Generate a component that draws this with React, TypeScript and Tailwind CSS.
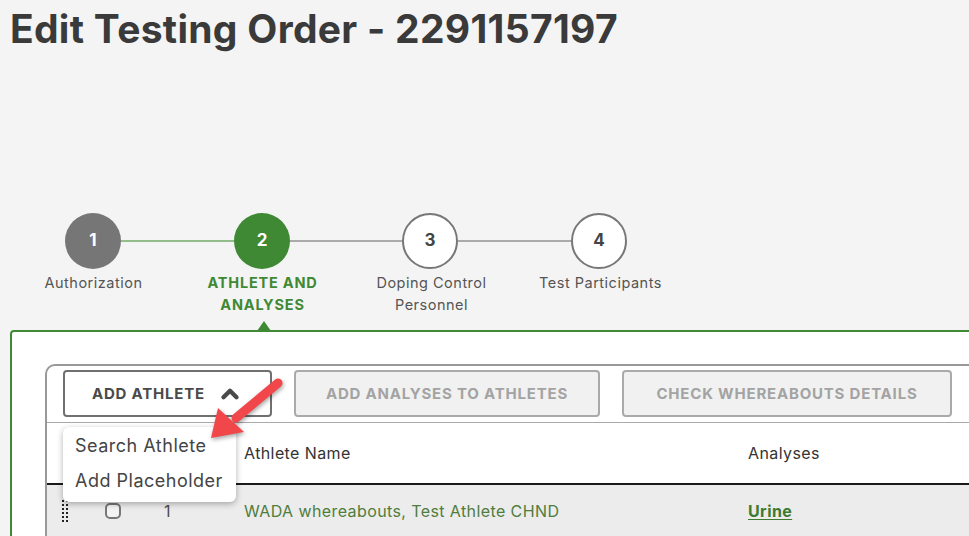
import { ChevronUp } from "lucide-react";

const font = { fontFamily: "Inter, 'Open Sans', sans-serif" };

type Step = { n: number; label: string[]; state: "done" | "active" | "todo" };

const steps: Step[] = [
  { n: 1, label: ["Authorization"], state: "done" },
  { n: 2, label: ["ATHLETE AND", "ANALYSES"], state: "active" },
  { n: 3, label: ["Doping Control", "Personnel"], state: "todo" },
  { n: 4, label: ["Test Participants"], state: "todo" },
];

function Circle({ step }: { step: Step }) {
  const cls =
    step.state === "done"
      ? "bg-[#767676] text-white"
      : step.state === "active"
        ? "bg-[#3f8934] text-white"
        : "bg-white text-[#444] border-2 border-[#777]";
  return (
    <div
      className={`w-[56px] h-[56px] rounded-full flex items-center justify-center text-[17px] font-bold shrink-0 ${cls}`}
    >
      {step.n}
    </div>
  );
}

function Stepper() {
  return (
    <div className="mt-[161px]">
      <div className="flex items-center pl-[65px]">
        <Circle step={steps[0]} />
        <div className="w-[113px] h-[2px] bg-[#93bd8a]" />
        <Circle step={steps[1]} />
        <div className="w-[112px] h-[2px] bg-[#aaa]" />
        <Circle step={steps[2]} />
        <div className="w-[113px] h-[2px] bg-[#aaa]" />
        <Circle step={steps[3]} />
      </div>
      <div className="flex pl-[9px] mt-[3px]">
        {steps.map((s) => (
          <div
            key={s.n}
            className={`w-[169px] text-center leading-[22px] ${
              s.state === "active"
                ? "text-[#3f8934] font-bold text-[14.5px] tracking-[0.8px]"
                : "text-[#555] text-[14.5px] tracking-[0.5px]"
            }`}
          >
            {s.label.map((l) => (
              <div key={l}>{l}</div>
            ))}
          </div>
        ))}
      </div>
    </div>
  );
}

function Handle() {
  return (
    <div className="grid grid-cols-2 gap-[2px] w-[6px]">
      {Array.from({ length: 12 }).map((_, i) => (
        <div key={i} className="w-[2px] h-[2px] bg-[#222]" />
      ))}
    </div>
  );
}

function RedArrow() {
  return (
    <svg
      className="absolute left-[200px] top-[370px] pointer-events-none"
      width="90"
      height="80"
      viewBox="0 0 90 80"
      style={{ filter: "drop-shadow(1px 2px 2px rgba(0,0,0,0.35))" }}
    >
      <line x1="78" y1="13" x2="36" y2="48" stroke="#f2474a" strokeWidth="9" strokeLinecap="round" />
      <polygon points="11,68 18,38 44,62" fill="#f2474a" />
    </svg>
  );
}

export default function App() {
  return (
    <div className="relative w-[969px] h-[536px] overflow-hidden bg-[#f4f4f4]" style={font}>
      <h1 className="pl-[10px] pt-[6px] text-[39px] leading-[46px] font-bold text-[#3a3a3a] tracking-[0.3px]">
        Edit Testing Order - 2291157197
      </h1>

      <Stepper />

      <div className="relative ml-[10px] mt-[14px] w-[1000px] h-[400px] bg-white border-2 border-[#3f8934] rounded-tl-[4px]">
        <div className="absolute -top-[11px] left-[245px] w-0 h-0 border-l-[7px] border-r-[7px] border-b-[10px] border-l-transparent border-r-transparent border-b-[#3f8934]" />
        <div className="ml-[33px] mt-[32px] border-2 border-[#999] rounded-tl-[10px] h-[300px]">
          <div className="flex gap-[22px] pl-[16px] pt-[4px] pb-[5px] border-b border-[#aaa]">
            <button className="flex items-center justify-center gap-[12px] w-[209px] h-[47px] pt-[2px] bg-white border-2 border-[#707070] rounded-[4px] text-[15px] font-bold tracking-[0.8px] text-[#4a4a4a]">
              ADD ATHLETE
              <ChevronUp size={26} strokeWidth={4} className="text-[#4a4a4a] -mt-[2px]" />
            </button>
            <button className="w-[306px] h-[47px] pt-[2px] bg-[#f1f1f1] border-2 border-[#aaa] rounded-[4px] text-[15px] font-bold tracking-[0.8px] text-[#a3a3a3]">
              ADD ANALYSES TO ATHLETES
            </button>
            <button className="w-[330px] h-[47px] pt-[2px] bg-[#f1f1f1] border-2 border-[#aaa] rounded-[4px] text-[15px] font-bold tracking-[0.8px] text-[#a3a3a3]">
              CHECK WHEREABOUTS DETAILS
            </button>
          </div>
          <div className="flex items-center h-[62px] border-b-2 border-[#1a1a1a] text-[16px] tracking-[0.4px] text-[#333] pl-[197px]">
            <div className="w-[504px]">Athlete Name</div>
            <div>Analyses</div>
          </div>
          <div className="flex items-center h-[52px] bg-[#ececec] pl-[15px] text-[16px] tracking-[0.4px]">
            <div className="w-[43px]">
              <Handle />
            </div>
            <div className="w-[59px]">
              <div className="w-[16px] h-[16px] rounded-[5px] border-2 border-[#777] bg-[#f4f4f4]" />
            </div>
            <div className="w-[80px] text-[#4a4a4a]">1</div>
            <div className="w-[504px] text-[#4f7d3c]">WADA whereabouts, Test Athlete CHND</div>
            <div className="text-[#3f7a2f] font-bold underline underline-offset-2">Urine</div>
          </div>
        </div>
      </div>

      <div className="absolute left-[63px] top-[427px] w-[173px] pt-[1px] pb-[4px] bg-white rounded-[6px] shadow-[0_2px_6px_rgba(0,0,0,0.3)] text-[18px] tracking-[0.5px] text-[#444]">
        <div className="px-[12px] h-[34px] flex items-center">Search Athlete</div>
        <div className="px-[12px] h-[36px] flex items-center">Add Placeholder</div>
      </div>

      <RedArrow />
    </div>
  );
}
